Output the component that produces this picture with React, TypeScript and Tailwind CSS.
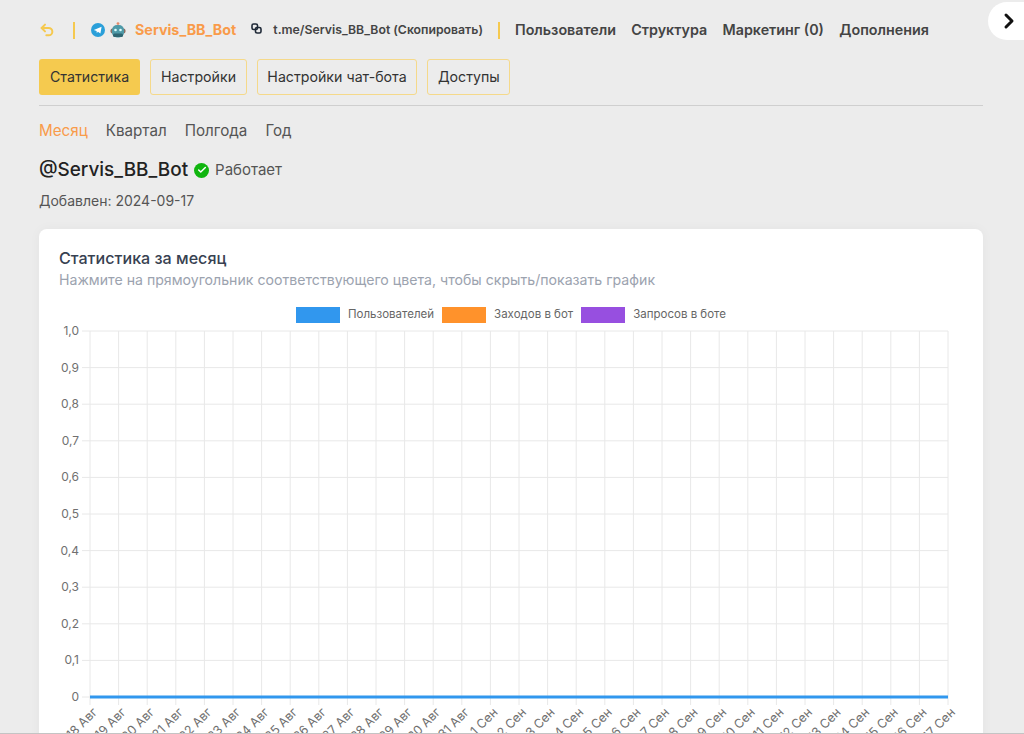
import { Check, ChevronRight, Undo2 } from "lucide-react";

const days = [
  "18 Авг", "19 Авг", "20 Авг", "21 Авг", "22 Авг", "23 Авг", "24 Авг", "25 Авг", "26 Авг", "27 Авг", "28 Авг",
  "29 Авг", "30 Авг", "31 Авг", "1 Сен", "2 Сен", "3 Сен", "4 Сен", "5 Сен", "6 Сен", "7 Сен", "8 Сен",
  "9 Сен", "10 Сен", "11 Сен", "12 Сен", "13 Сен", "14 Сен", "15 Сен", "16 Сен", "17 Сен",
];
const yLabels = ["1,0", "0,9", "0,8", "0,7", "0,6", "0,5", "0,4", "0,3", "0,2", "0,1", "0"];

const navItems = ["Пользователи", "Структура", "Маркетинг (0)", "Дополнения"];
const periods = ["Квартал", "Полгода", "Год"];
const tabs = ["Настройки", "Настройки чат-бота", "Доступы"];
const legend = [
  { label: "Пользователей", color: "bg-[#3197ee]" },
  { label: "Заходов в бот", color: "bg-[#ff922b]" },
  { label: "Запросов в боте", color: "bg-[#974fe0]" },
];

// plot area inside the svg, the svg itself starts at the card's inner left edge
const left = 31;
const right = 889;
const top = 8;
const bottom = 374;

function Chart() {
  const stepX = (right - left) / 30;
  const stepY = (bottom - top) / 10;
  return (
    <svg width="906" height="420" className="block">
      {yLabels.map((label, i) => (
        <g key={label}>
          <line x1={left - 8} x2={right} y1={top + i * stepY} y2={top + i * stepY} stroke="#e8e8e8" />
          <text x={left - 11} y={top + i * stepY + 4} textAnchor="end" fontSize="12" fill="#707070">
            {label}
          </text>
        </g>
      ))}
      {days.map((day, i) => {
        const x = left + i * stepX;
        return (
          <g key={day}>
            <line x1={x} x2={x} y1={top} y2={bottom + 8} stroke="#e8e8e8" />
            <text
              x={x + 8}
              y={bottom + 16}
              textAnchor="end"
              fontSize="12.5"
              fill="#707070"
              transform={`rotate(-45 ${x + 8} ${bottom + 16})`}
            >
              {day}
            </text>
          </g>
        );
      })}
      <line x1={left} x2={right} y1={bottom} y2={bottom} stroke="#3197ee" strokeWidth="3" />
    </svg>
  );
}

export default function App() {
  return (
    <div className="relative h-[734px] overflow-hidden bg-[#ececec] pl-[39px] pr-[41px] font-['Inter',sans-serif] border-b border-[#c4c4c4]">
      <header className="flex h-[59px] items-center pt-[1px]">
        <Undo2 size={16} strokeWidth={3} className="text-[#f5c94f]" />
        <div className="ml-[18px] h-[17px] w-[2px] bg-[#f5c94f]" />
        <svg width="14" height="14" viewBox="0 0 14 14" className="ml-[16px]">
          <circle cx="7" cy="7" r="7" fill="#2a9fd9" />
          <path d="M2.8 6.9 10.6 3.8 9.4 10.4 7 8.7 5.8 9.9 5.6 8z" fill="#fff" />
        </svg>
        <svg width="16" height="16" viewBox="0 0 16 16" className="ml-[5px]">
          <circle cx="8" cy="1.6" r="1.4" fill="#e58a6a" />
          <rect x="0.5" y="6.5" width="15" height="5" rx="2" fill="#8d6e63" />
          <rect x="2" y="3" width="12" height="12.5" rx="5" fill="#4f9aa8" />
          <circle cx="5.5" cy="8" r="1.3" fill="#dff" />
          <circle cx="10.5" cy="8" r="1.3" fill="#dff" />
          <rect x="3" y="11.5" width="10" height="3.5" rx="1.5" fill="#2f6672" />
        </svg>
        <span className="ml-[9px] text-[14.3px] font-bold text-[#f99b4a]">Servis_BB_Bot</span>
        <svg width="11" height="11" viewBox="0 0 11 11" fill="none" stroke="#1f2937" strokeWidth="1.6" className="ml-[15px] mb-[3px]">
          <rect x="1" y="1" width="5.5" height="5.5" rx="1.6" />
          <rect x="4.5" y="4.5" width="5.5" height="5.5" rx="1.6" />
        </svg>
        <span className="ml-[11px] text-[12.25px] font-semibold text-[#444]">t.me/Servis_BB_Bot (Скопировать)</span>
        <div className="ml-[15px] h-[17px] w-[2px] bg-[#f5c94f]" />
        <nav className="ml-[15px] flex gap-[15.3px] text-[14.3px] font-semibold text-[#444]">
          {navItems.map((item) => (
            <span key={item}>{item}</span>
          ))}
        </nav>
      </header>

      <div className="flex gap-[10.3px] border-b border-[#cfcfcf] pb-[10px] text-[14.2px] text-[#333]">
        <button className="h-[36px] rounded-[3px] bg-[#f5ca4f] px-[11px]">Статистика</button>
        {tabs.map((tab) => (
          <button key={tab} className="h-[36px] rounded-[3px] border border-[#f5d98a] px-[9.5px]">
            {tab}
          </button>
        ))}
      </div>

      <div className="mt-[15px] flex gap-[18px] text-[15.2px] leading-[20px] text-[#555]">
        <span className="text-[#f99b4a]">Месяц</span>
        {periods.map((period) => (
          <span key={period}>{period}</span>
        ))}
      </div>

      <div className="mt-[15px] flex items-center">
        <h1 className="text-[18.9px] font-medium leading-[28px] text-[#222]">@Servis_BB_Bot</h1>
        <span className="ml-[6px] flex h-[15px] w-[15px] items-center justify-center rounded-full bg-[#10b50f]">
          <Check size={10} strokeWidth={3.5} className="text-white" />
        </span>
        <span className="ml-[6px] text-[15px] text-[#555]">Работает</span>
      </div>

      <p className="mt-[7px] text-sm leading-[20px] text-[#555]">Добавлен: 2024-09-17</p>

      <section className="mt-[18px] rounded-lg bg-white px-[20px] pt-[18px] pb-[20px] shadow-[0_0_12px_rgba(0,0,0,0.04)]">
        <h2 className="text-[16.1px] font-medium leading-[22px] text-[#374151]">Статистика за месяц</h2>
        <p className="mt-[1px] text-[14.14px] leading-[20px] text-[#9ca3af]">
          Нажмите на прямоугольник соответствующего цвета, чтобы скрыть/показать график
        </p>
        <div className="mt-[16px] flex justify-center gap-[8px] text-[11.5px] leading-[17px] text-[#666]">
          {legend.map((item) => (
            <div key={item.label} className="flex items-center gap-[8px]">
              <span className={`h-[16px] w-[44px] ${item.color}`} />
              <span>{item.label}</span>
            </div>
          ))}
        </div>
        <Chart />
      </section>

      <div className="absolute right-0 top-[2px] flex h-[38px] w-[36px] items-center justify-center rounded-l-full bg-white pl-[6px]">
        <ChevronRight size={24} strokeWidth={3} className="text-[#111]" />
      </div>
    </div>
  );
}
